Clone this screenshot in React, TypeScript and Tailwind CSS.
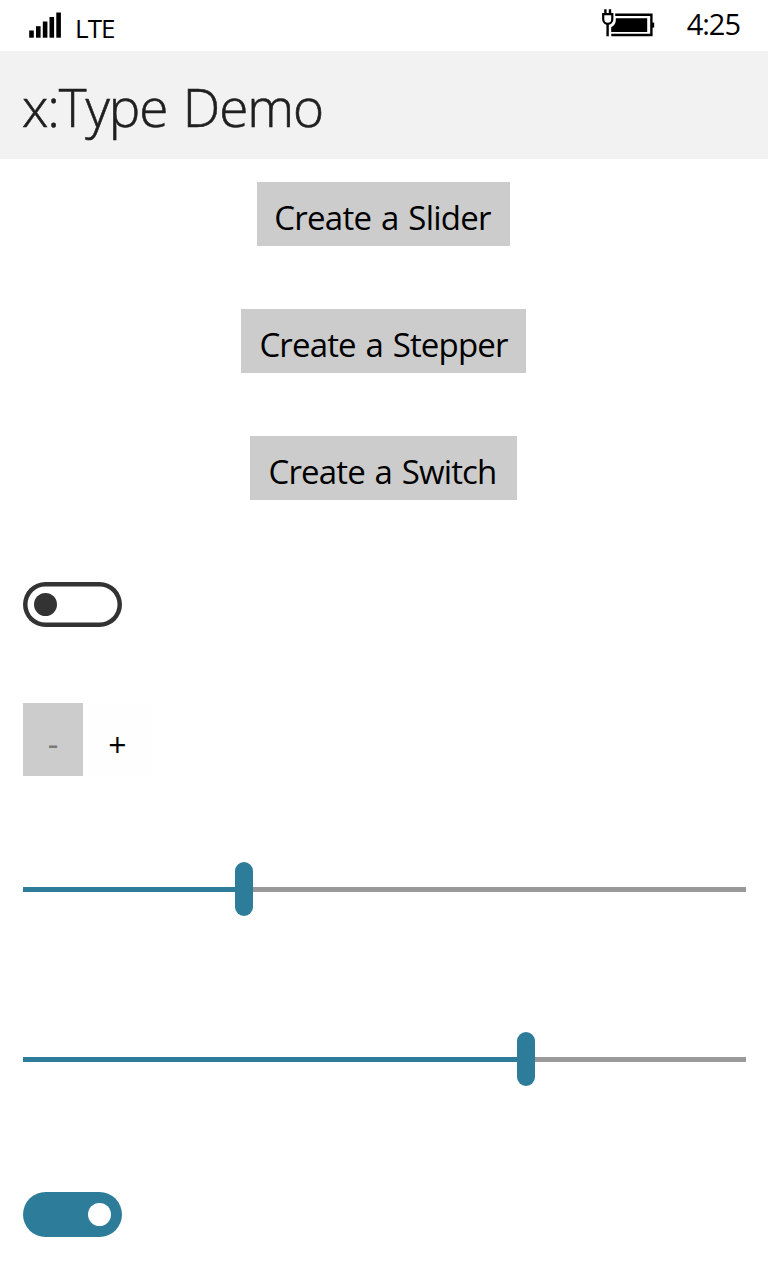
function SignalIcon() {
  return (
    <svg width="34" height="28" viewBox="0 0 34 28" className="block" fill="#000">
      <rect x="1.2" y="18.5" width="4.6" height="7.2" />
      <rect x="8" y="14.2" width="4.6" height="11.5" />
      <rect x="14.8" y="9.5" width="4.6" height="16.2" />
      <rect x="21.5" y="5" width="4.6" height="20.7" />
      <rect x="28.3" y="0.5" width="4.6" height="25.2" />
    </svg>
  );
}

function BatteryIcon() {
  return (
    <svg width="54" height="28" viewBox="0 0 54 28" className="block" fill="none" stroke="#000">
      <path d="M13.2 5.8H49.4V26H9.3" strokeWidth="2.4" />
      <rect x="50" y="13.6" width="2.2" height="5" fill="#000" stroke="none" />
      <path d="M13.8 9.2H45.2V22.9H9.2V18.2C12 17 13.6 14.5 13.8 11.5Z" fill="#000" stroke="none" />
      <path d="M3.4 0.2V5.5M8 0.2V5.5" strokeWidth="2.4" />
      <path d="M1.2 5.2H10.3V10.2A4.55 4.7 0 0 1 1.2 10.2Z" strokeWidth="2.2" />
      <path d="M5.6 15V27.3" strokeWidth="2.4" />
    </svg>
  );
}

function DemoButton({ label, className }: { label: string; className: string }) {
  return (
    <button
      className={`flex h-16 items-center justify-center bg-[#cccccc] pt-[6px] text-[33px] leading-none whitespace-nowrap text-black [word-spacing:2px] ${className}`}
    >
      {label}
    </button>
  );
}

function Slider({ value }: { value: number }) {
  return (
    <div className="flex h-[54px] w-[723px] items-center">
      <div className="h-[5px] bg-[#2d7d9a]" style={{ width: value }} />
      <div className="h-[54px] w-[18px] rounded-full bg-[#2d7d9a]" />
      <div className="h-[5px] flex-1 bg-[#999999]" />
    </div>
  );
}

export default function App() {
  return (
    <div className="h-[1280px] w-[768px] overflow-hidden bg-white font-['Open_Sans','Noto_Sans',sans-serif] text-black">
      <div className="flex h-[51px] items-start justify-between pr-[28px] pl-[28px]">
        <div className="flex items-start">
          <div className="pt-3">
            <SignalIcon />
          </div>
          <span className="mt-[15px] ml-[13px] text-[26px] leading-[27px] tracking-[-0.9px]">LTE</span>
        </div>
        <div className="flex items-start">
          <div className="pt-[9px]">
            <BatteryIcon />
          </div>
          <span className="mt-[9px] ml-[31px] text-[29px] leading-[30px] tracking-[-1px]">4:25</span>
        </div>
      </div>

      <header className="flex h-[108px] items-center bg-[#f2f2f2] pt-[3px] pl-[22px]">
        <h1 className="text-[53px] leading-none font-light tracking-[-1.1px] text-[#1f1f1f] [-webkit-text-stroke:0.6px_#1f1f1f] [word-spacing:3px]">
          x:Type Demo
        </h1>
      </header>

      <main className="flex flex-col items-start px-[23px] pt-[23px]">
        <div className="flex w-[721px] flex-col items-center gap-[63px]">
          <DemoButton label="Create a Slider" className="w-[253px] pr-[2px] tracking-[-0.77px]" />
          <DemoButton label="Create a Stepper" className="w-[285px] tracking-[-0.85px]" />
          <DemoButton label="Create a Switch" className="w-[267px] pr-[2px] tracking-[-0.85px]" />
        </div>

        <div className="mt-[82px] flex h-[45px] w-[99px] items-center rounded-full pl-[11px] shadow-[inset_0_0_0_4.5px_#333333]">
          <div className="size-[23px] rounded-full bg-[#333333]" />
        </div>

        <div className="mt-[76px] flex h-[73px] leading-none">
          <button className="flex w-[60px] items-center justify-center bg-[#cccccc] pt-[7px] text-[33px] text-[#7a7a7a]">-</button>
          <button className="flex w-[69px] items-center justify-center bg-[#fefefe] pt-[10px] text-[32px]">+</button>
        </div>

        <div className="mt-[86px]">
          <Slider value={212} />
        </div>
        <div className="mt-[116px]">
          <Slider value={494} />
        </div>

        <div className="mt-[106px] flex h-[45px] w-[99px] items-center justify-end rounded-full bg-[#2d7d9a] pr-[11px]">
          <div className="size-[23px] rounded-full bg-white" />
        </div>
      </main>
    </div>
  );
}
